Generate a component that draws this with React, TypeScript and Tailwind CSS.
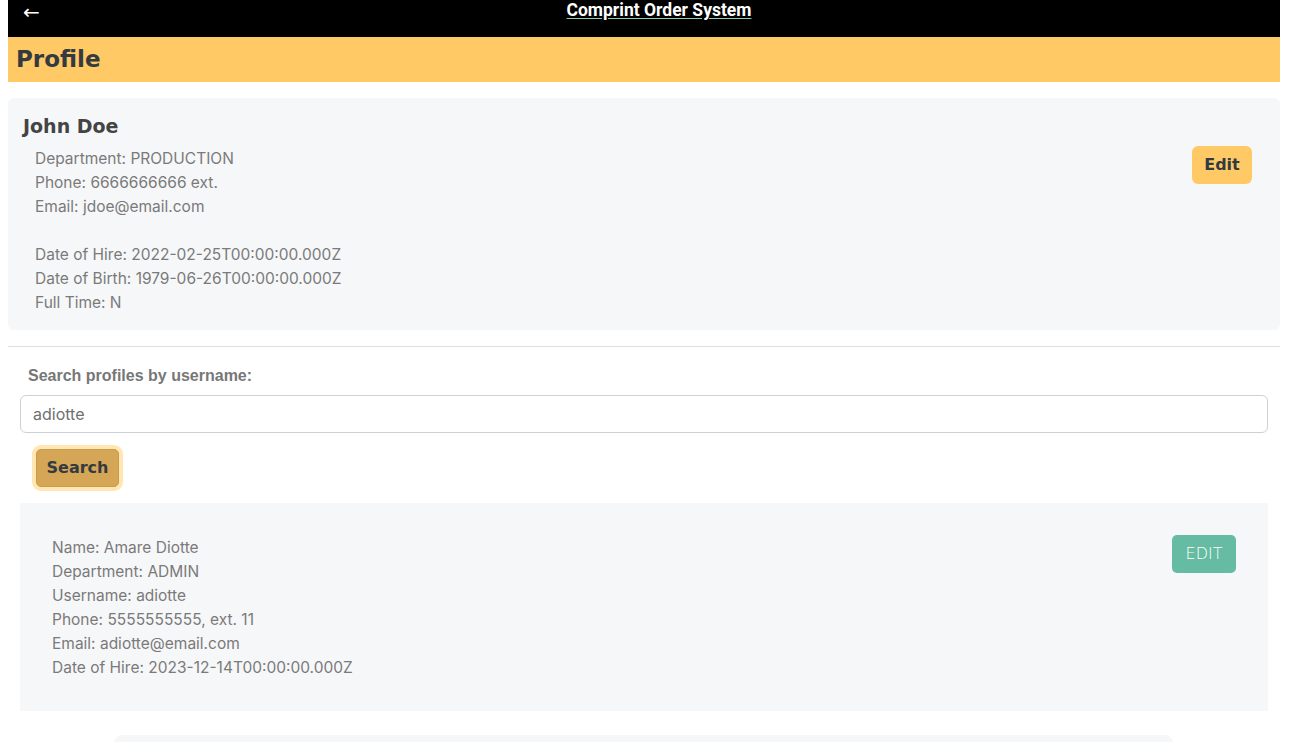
import React from "react";

export default function App() {
  const lines1a = ["Department: PRODUCTION", "Phone: 6666666666 ext.", "Email: jdoe@email.com"];
  const lines1b = ["Date of Hire: 2022-02-25T00:00:00.000Z", "Date of Birth: 1979-06-26T00:00:00.000Z", "Full Time: N"];
  const lines2 = [
    "Name: Amare Diotte",
    "Department: ADMIN",
    "Username: adiotte",
    "Phone: 5555555555, ext. 11",
    "Email: adiotte@email.com",
    "Date of Hire: 2023-12-14T00:00:00.000Z",
  ];
  return (
    <div className="min-h-[742px] bg-white font-['Inter',sans-serif] overflow-hidden">
      <div className="ml-2 w-[1272px]">
        <div className="h-[37px] bg-black flex items-start relative">
          <span className="absolute left-[15px] top-[0px] text-white text-[20px] leading-[24px] font-['DejaVu_Sans',sans-serif]">←</span>
          <div className="flex-1 flex justify-center">
            <span className="text-white font-bold text-[17.5px] leading-[20px] font-['Roboto',sans-serif] underline decoration-[#7fd1b9] underline-offset-2 ml-[30px]">
              Comprint Order System
            </span>
          </div>
        </div>
        <div className="h-[45px] bg-[#ffc966] flex items-center px-[8px]">
          <h1 className="text-[23px] font-bold text-[#333a40] font-['DejaVu_Sans',sans-serif]">Profile</h1>
        </div>

        <div className="mt-[16px] bg-[#f6f7f9] rounded-[6px] h-[232px] px-[15px] pt-[14px] flex justify-between">
          <div>
            <div className="text-[19px] font-bold text-[#444] font-['DejaVu_Sans',sans-serif] leading-[28px]">John Doe</div>
            <div className="pl-[12px] text-[15.5px] leading-[24px] text-[#7a7a7a] mt-[7px]">
              {lines1a.map((l) => (
                <div key={l}>{l}</div>
              ))}
              <div className="h-[24px]" />
              {lines1b.map((l) => (
                <div key={l}>{l}</div>
              ))}
            </div>
          </div>
          <div className="pt-[34px] pr-[13px]">
            <button className="h-[38px] w-[60px] rounded-[6px] bg-[#ffc966] text-[#333a40] font-bold text-[16px] font-['DejaVu_Sans',sans-serif]">
              Edit
            </button>
          </div>
        </div>

        <div className="mt-[16px] h-px bg-[#dddddd]" />

        <div className="px-[12px]">
          <div className="mt-[19px] pl-[8px] text-[16px] font-bold text-[#777] font-['Liberation_Sans',sans-serif] leading-[20px]">
            Search profiles by username:
          </div>
          <div className="mt-[9px] h-[38px] border border-[#ccd1d7] rounded-[6px] flex items-center px-[12px] text-[16px] text-[#707070]">
            adiotte
          </div>
          <div className="mt-[16px] pl-[16px]">
            <button className="h-[38px] w-[83px] rounded-[5px] bg-[#d4a656] ring-4 ring-[#ffe6b3] text-[#333a40] font-bold text-[16px] font-['DejaVu_Sans',sans-serif] border border-[#c89a4b]">
              Search
            </button>
          </div>
          <div className="mt-[16px] bg-[#f6f7f9] h-[208px] flex justify-between pl-[32px] pr-[32px] pt-[32px]">
            <div className="text-[15.5px] leading-[24px] text-[#7a7a7a] pt-[1px]">
              {lines2.map((l) => (
                <div key={l}>{l}</div>
              ))}
            </div>
            <div>
              <button className="h-[38px] w-[64px] rounded-[5px] bg-[#66bba3] text-white text-[16px] font-['DejaVu_Sans',sans-serif] font-light">
                EDIT
              </button>
            </div>
          </div>
        </div>
        <div className="mt-[24px] ml-[106px] w-[1059px] h-[40px] bg-[#f6f7f9] rounded-[8px]" />
      </div>
    </div>
  );
}
